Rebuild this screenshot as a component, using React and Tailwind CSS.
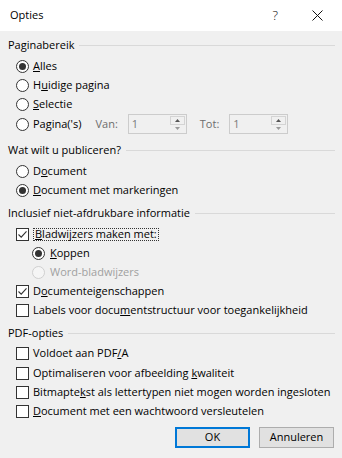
import React from "react";

const font = { fontFamily: '"Open Sans", "Noto Sans", sans-serif' };

function Radio({ checked, disabled }) {
  return (
    <svg width="13" height="13" viewBox="0 0 13 13" className="shrink-0">
      <circle cx="6.5" cy="6.5" r="6" fill={disabled ? "#f5f5f5" : "#fff"} stroke={disabled ? "#cfcfcf" : "#333"} strokeWidth="1" />
      {checked && <circle cx="6.5" cy="6.5" r="3.5" fill="#333" />}
    </svg>
  );
}

function Check({ checked }) {
  return (
    <svg width="13" height="13" viewBox="0 0 13 13" className="shrink-0">
      <rect x="0.5" y="0.5" width="12" height="12" fill="#fff" stroke="#333" strokeWidth="1" />
      {checked && <path d="M2.5 6.5 L5.2 9.2 L10.5 3.3" fill="none" stroke="#333" strokeWidth="1.1" />}
    </svg>
  );
}

function Header({ children, className = "" }) {
  return (
    <div className={"flex h-[20px] items-center " + className}>
      <span className="whitespace-nowrap text-[11px] text-black">{children}</span>
      <div className="ml-[5px] h-px flex-1 bg-[#d9d9d9]" />
    </div>
  );
}

function Row({ children, h = "h-[19px]", indent = "pl-[8px]" }) {
  return <div className={"flex items-center gap-[4px] whitespace-nowrap text-[11px] text-black " + h + " " + indent}>{children}</div>;
}

function Spin() {
  return (
    <div className="flex h-[20px] w-[59px] items-stretch border border-[#cccccc] bg-[#f0f0f0]">
      <div className="flex-1 pl-[3px] text-[11px] leading-[18px] text-[#7a7a7a]">1</div>
      <div className="my-[1px] mr-[1px] flex w-[15px] flex-col">
        <div className="flex h-[9px] items-center justify-center border border-[#d4d4d4] bg-[#f0f0f0]">
          <svg width="5" height="3" viewBox="0 0 5 3"><path d="M0 3 L2.5 0 L5 3 Z" fill="#555" /></svg>
        </div>
        <div className="flex h-[8px] items-center justify-center">
          <svg width="5" height="3" viewBox="0 0 5 3"><path d="M0 0 L2.5 3 L5 0 Z" fill="#999" /></svg>
        </div>
      </div>
    </div>
  );
}

export default function App() {
  return (
    <div style={font} className="flex h-[458px] w-[342px] flex-col overflow-hidden bg-[#f0f0f0] text-black">
      <div className="flex h-[31px] shrink-0 items-center bg-white pl-[10px]">
        <span className="text-[11px]">Opties</span>
        <span className="ml-auto mr-[34px] text-[13px] font-light leading-none">?</span>
        <svg width="11" height="11" viewBox="0 0 11 11" className="mr-[19px]">
          <path d="M0.5 0.5 L10.5 10.5 M10.5 0.5 L0.5 10.5" stroke="#111" strokeWidth="1" />
        </svg>
      </div>

      <div className="flex flex-col pl-[8px] pr-[7px] pt-[4px]">
        <Header>Paginabereik</Header>
        <div className="mt-[2px] flex flex-col">
          <Row><Radio checked /><span><u>A</u>lles</span></Row>
          <Row><Radio /><span>H<u>u</u>idige pagina</span></Row>
          <Row><Radio /><span><u>S</u>electie</span></Row>
          <Row h="h-[20px]">
            <Radio /><span>Pa<u>g</u>ina('s)</span>
            <span className="ml-[10px] mr-[6px] text-[#6d6d6d]">Van:</span>
            <Spin />
            <span className="ml-[9px] mr-[6px] text-[#6d6d6d]">Tot:</span>
            <Spin />
          </Row>
        </div>

        <Header className="mt-[6px]">Wat wilt u publiceren?</Header>
        <div className="mt-[2px] flex flex-col">
          <Row><Radio /><span>D<u>o</u>cument</span></Row>
          <Row><Radio checked /><span><u>D</u>ocument met markeringen</span></Row>
        </div>

        <Header className="mt-[3px]">Inclusief niet-afdrukbare informatie</Header>
        <div className="mt-[2px] flex flex-col">
          <Row><Check checked /><span className="border border-dotted border-[#333] px-[1px] leading-[10px] pb-[1px]"><u>B</u>ladwijzers maken met:</span></Row>
          <Row indent="pl-[24px]"><Radio checked /><span className="ml-[1px]"><u>K</u>oppen</span></Row>
          <Row indent="pl-[24px]"><Radio disabled /><span className="ml-[1px] text-[#a0a0a0]">Word-bladwijzers</span></Row>
          <Row><Check checked /><span>D<u>o</u>cumenteigenschappen</span></Row>
          <Row><Check /><span>Labels voor docu<u>m</u>entstructuur voor toegankelijkheid</span></Row>
        </div>

        <Header className="mt-[3px]">PDF-opties</Header>
        <div className="mt-[1px] flex flex-col">
          <Row><Check /><span>Voldoet aan PDF<u>/</u>A</span></Row>
          <Row h="h-[20px]"><Check /><span>Optimaliseren voor afbeelding <u>k</u>waliteit</span></Row>
          <Row><Check /><span>Bitmapte<u>k</u>st als lettertypen niet mogen worden ingesloten</span></Row>
          <Row><Check /><span><u>D</u>ocument met een wachtwoord versleutelen</span></Row>
        </div>

        <div className="mt-[6px] flex justify-end gap-[9px] pr-[1px]">
          <button className="flex h-[21px] w-[75px] items-center justify-center border-2 border-[#0078d7] bg-[#e1e1e1] text-[11px]">OK</button>
          <button className="flex h-[21px] w-[75px] items-center justify-center border border-[#adadad] bg-[#e1e1e1] text-[11px]">Annuleren</button>
        </div>
      </div>
    </div>
  );
}
